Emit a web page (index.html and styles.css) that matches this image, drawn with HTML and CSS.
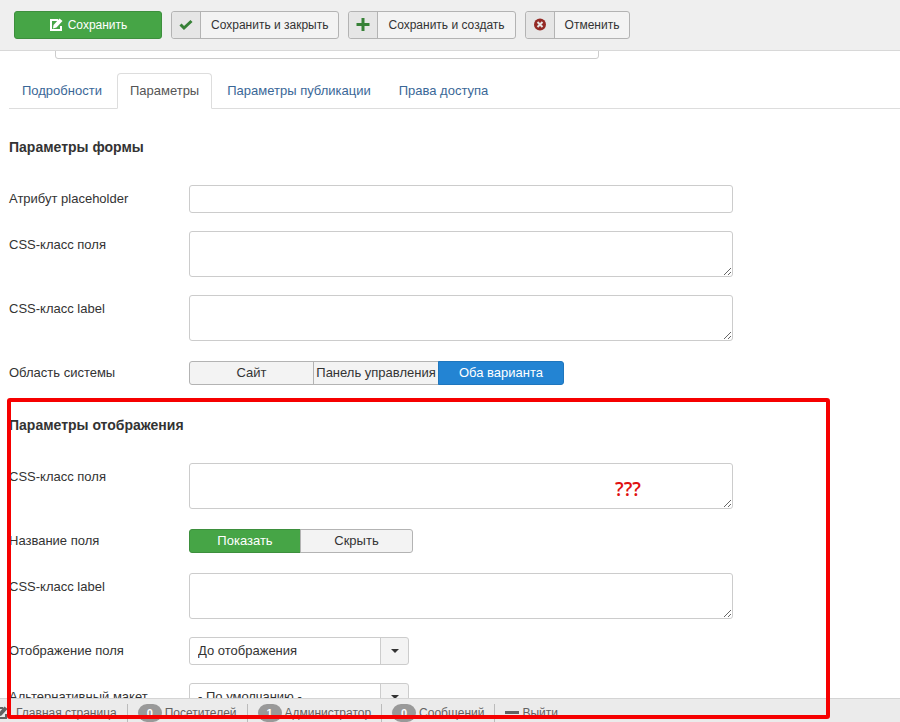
FILE: index.html
```html
<!DOCTYPE html>
<html lang="ru">
<head>
    <meta charset="utf-8">
    <title>Поля: Изменить</title>
    <meta name="viewport" content="width=device-width,initial-scale=1.0">
    <link rel="stylesheet" href="styles.css">
</head>
<body>
    <header class="toolbar">
        <button type="button" class="btn btn-success">
            <svg class="icon" viewBox="0 0 14 14"><path fill="none" stroke="currentColor" stroke-width="2" d="M9 2H2v10h10V8"/><path fill="currentColor" d="M4.500 7l6-6.500 3 2.500-6 6.500-3.500 1z"/></svg>
            Сохранить
        </button>
        <button type="button" class="btn btn-split">
            <span class="btn-icon green"><svg class="icon" viewBox="0 0 14 14"><path fill="none" stroke="currentColor" stroke-width="3" d="M1.500 6.500l3.500 3.500 7.500-7"/></svg></span>
            <span class="btn-text">Сохранить и закрыть</span>
        </button>
        <button type="button" class="btn btn-split">
            <span class="btn-icon green"><svg class="icon" viewBox="0 0 14 14"><path fill="none" stroke="currentColor" stroke-width="3" d="M7 0v13M.5 6.500h13"/></svg></span>
            <span class="btn-text">Сохранить и создать</span>
        </button>
        <button type="button" class="btn btn-split">
            <span class="btn-icon red"><svg class="icon" viewBox="0 0 14 14"><circle cx="7" cy="6.500" r="6" fill="currentColor"/><path fill="none" stroke="#e6e6e6" stroke-width="2" d="M4.500 4l5 5M9.500 4l-5 5"/></svg></span>
            <span class="btn-text">Отменить</span>
        </button>
    </header>

    <main class="content">
        <input type="text" class="field title-field" aria-label="Заголовок">

        <nav class="tabs">
            <a href="#details">Подробности</a>
            <a href="#params" class="active">Параметры</a>
            <a href="#publishing">Параметры публикации</a>
            <a href="#rules">Права доступа</a>
        </nav>

        <section>
            <h3>Параметры формы</h3>
            <div class="row">
                <label class="name" for="hint">Атрибут placeholder</label>
                <input type="text" class="field" id="hint">
            </div>
            <div class="row">
                <label class="name" for="class">CSS-класс поля</label>
                <textarea class="field" id="class"></textarea>
            </div>
            <div class="row">
                <label class="name" for="label-class">CSS-класс label</label>
                <textarea class="field" id="label-class"></textarea>
            </div>
            <div class="row">
                <span class="name" id="area-name">Область системы</span>
                <div class="switch three" role="radiogroup" aria-labelledby="area-name">
                    <input type="radio" name="area" id="area1"><label for="area1">Сайт</label>
                    <input type="radio" name="area" id="area2"><label for="area2">Панель управления</label>
                    <input type="radio" name="area" id="area3" checked><label for="area3" class="blue">Оба варианта</label>
                </div>
            </div>
        </section>

        <section>
            <h3>Параметры отображения</h3>
            <div class="row">
                <label class="name" for="render-class">CSS-класс поля</label>
                <textarea class="field" id="render-class"></textarea>
            </div>
            <div class="row">
                <span class="name" id="show-name">Название поля</span>
                <div class="switch two" role="radiogroup" aria-labelledby="show-name">
                    <input type="radio" name="show" id="show1" checked><label for="show1">Показать</label>
                    <input type="radio" name="show" id="show0"><label for="show0">Скрыть</label>
                </div>
            </div>
            <div class="row">
                <label class="name" for="label-render-class">CSS-класс label</label>
                <textarea class="field" id="label-render-class"></textarea>
            </div>
            <div class="row">
                <label class="name" for="display">Отображение поля</label>
                <div class="select"><select id="display"><option>До отображения</option></select></div>
            </div>
            <div class="row">
                <label class="name" for="layout">Альтернативный макет</label>
                <div class="select"><select id="layout"><option>- По умолчанию -</option></select></div>
            </div>
        </section>
    </main>

    <footer class="status">
        <a href="#home"><svg class="icon" viewBox="0 0 14 14"><path fill="none" stroke="currentColor" stroke-width="2" d="M9 2H2v10h10V8"/><path fill="currentColor" d="M4.500 7l6-6.500 3 2.500-6 6.500-3.500 1z"/></svg>Главная страница</a>
        <span><b class="badge">0</b>Посетителей</span>
        <span><b class="badge">1</b>Администратор</span>
        <a href="#messages"><b class="badge">0</b>Сообщений</a>
        <a href="#logout"><svg class="icon" viewBox="0 0 14 14"><path fill="currentColor" d="M0 5h14v3H0z"/></svg>Выйти</a>
    </footer>

    <div class="mark"><span class="mark-text">???</span></div>
</body>
</html>
```
FILE: styles.css
```css
* { box-sizing: border-box; }
html, body { margin: 0; padding: 0; }
body { display: flex; flex-direction: column; height: 100vh; overflow: hidden; background: #fff; color: #333; font-family: "Liberation Sans", Arial, sans-serif; font-size: 13px; line-height: 18px; }
button, input, textarea, select { font: inherit; color: inherit; }
a { color: #3a6797; text-decoration: none; }
.icon { width: 14px; height: 14px; flex: none; }

/* toolbar */
.toolbar { display: flex; flex: none; gap: 9px; padding: 11px 14px; background: #efefef; border-bottom: 1px solid #d8d8d8; position: relative; font-size: 12px; }
.btn { display: flex; align-items: center; justify-content: center; height: 28px; padding: 0; background: #f3f3f3; border: 1px solid #b3b3b3; border-radius: 3px; white-space: nowrap; }
.btn-success { width: 148px; gap: 5px; background: #46a546; border-color: #3d8f3d; color: #fff; }
.btn-split { align-items: stretch; }
.btn-icon { display: flex; align-items: center; justify-content: center; width: 29px; background: #e6e6e6; border-right: 1px solid #b3b3b3; border-radius: 3px 0 0 3px; }
.btn-text { padding: 4px 10px; }
.green { color: #378137; }
.red { color: #942a25; }

/* form */
.content { flex: 1; min-height: 0; overflow: hidden; padding-left: 9px; }
.field { display: block; flex: 1; min-width: 0; max-width: 544px; height: 28px; margin: 0; padding: 4px 6px; background: #fff; border: 1px solid #ccc; border-radius: 3px; }
textarea.field { height: 46px; resize: vertical; }
.title-field { width: 100%; margin: -20px 0 14px 46px; }
.tabs { display: flex; border-bottom: 1px solid #ddd; }
.tabs a { margin: 0 2px -1px 0; padding: 8px 12px; border: 1px solid transparent; border-radius: 4px 4px 0 0; white-space: nowrap; }
.tabs .active { background: #fff; border-color: #ddd #ddd #fff; color: #555; }
h3 { margin: 29px 0; font-size: 14px; line-height: 18px; }
.row { display: flex; align-items: flex-start; margin-bottom: 18px; }
.name { flex: none; width: 180px; padding-top: 5px; }

.switch { display: grid; padding: 2px 0; }
.switch.three { grid-template-columns: repeat(3, 125px); }
.switch.two { grid-template-columns: repeat(2, 112px); }
.switch input { position: absolute; opacity: 0; }
.switch label { height: 24px; margin-left: -1px; padding: 2px 0; background: #f3f3f3; border: 1px solid #b3b3b3; text-align: center; white-space: nowrap; }
.switch label:first-of-type { margin-left: 0; border-radius: 3px 0 0 3px; }
.switch label:last-of-type { border-radius: 0 3px 3px 0; }
.switch input:checked + label { background: #46a546; border-color: #3d8f3d; color: #fff; }
.switch input:checked + .blue { background: #2384d3; border-color: #1f76bd; }

.select { position: relative; width: 220px; }
.select select { display: block; width: 100%; height: 28px; padding: 0 36px 0 8px; appearance: none; background: linear-gradient(90deg, #ccc 1px, #f3f3f3 1px) right / 28px 100% no-repeat #fff; border: 1px solid #ccc; border-radius: 3px; }
.select::after { content: ""; position: absolute; right: 10px; top: 12px; border: 4px solid transparent; border-top-color: #333; border-bottom: 0; pointer-events: none; }

/* status bar */
.status { display: flex; flex: none; height: 24px; padding-top: 5px; overflow: hidden; background: #ebebeb; border-top: 1px solid #d4d4d4; font-size: 12px; position: relative; white-space: nowrap; }
.status > * { display: flex; align-items: center; height: 18px; gap: 3px; padding: 0 10px; color: #626262; }
.status > * + * { border-left: 1px solid #bbb; }
.status > :first-child { gap: 8px; margin-left: -16px; }
.badge { width: 24px; height: 18px; background: #999; border-radius: 9px; color: #fff; font-size: 11px; text-align: center; }

/* highlighted area */
.mark { position: absolute; left: 7px; top: 398px; right: 70px; bottom: 3px; border: 4px solid #f60000; border-radius: 3px; pointer-events: none; }
.mark-text { position: absolute; left: 604px; top: 74px; color: #e01010; font: 600 19px/26px "Open Sans", sans-serif; }
```
